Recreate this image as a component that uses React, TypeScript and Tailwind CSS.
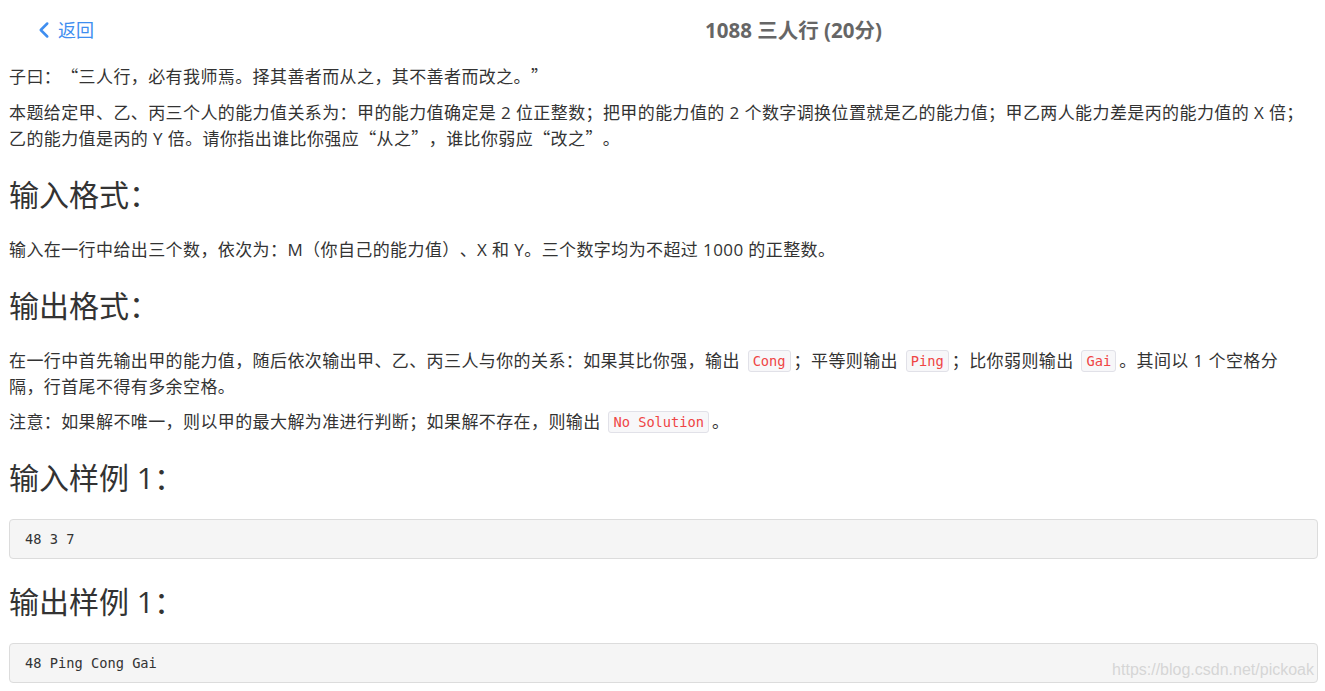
import { ChevronLeft } from "lucide-react";

const Code = ({ children }: { children: React.ReactNode }) => (
  <code className="mx-[3px] inline-block rounded-[3px] border border-[#e1e1e8] bg-[#f7f7f9] px-[4px] font-['DejaVu_Sans_Mono',monospace] text-[13.7px] leading-[20px] tracking-normal text-[#ef4444] align-[1px]">
    {children}
  </code>
);

// full-width curly quotes, as the CJK font draws them
const Q = ({ children }: { children: React.ReactNode }) => (
  <span className="font-['Noto_Sans_CJK_SC',sans-serif] leading-none">{children}</span>
);

const Heading = ({ children }: { children: React.ReactNode }) => (
  <h2 className="mt-[25px] mb-[25px] text-[30px] leading-[35px] font-normal tracking-normal text-[#333]">{children}</h2>
);

const Sample = ({ text, mark }: { text: string; mark?: boolean }) => (
  <div className="relative -mt-[1px] rounded-[4px] border border-[#dcdcdc] bg-[#f5f5f5] px-[15px] py-[9px] font-['DejaVu_Sans_Mono',monospace] text-[13.7px] leading-[20px] tracking-normal text-[#333]">
    {text}
    {mark && (
      <span className="absolute right-[3px] bottom-[1px] font-['Liberation_Sans',sans-serif] text-[16px] leading-[22px] text-[#d6d6d6]">
        https://blog.csdn.net/pickoak
      </span>
    )}
  </div>
);

export default function App() {
  return (
    <div className="min-h-[691px] bg-white font-['Open_Sans','Noto_Sans_CJK_SC',sans-serif] text-[#333] [text-spacing-trim:space-all]">
      <header className="flex h-[60px] items-center pl-[31px]">
        <button className="flex items-center text-[#3f8ef0]">
          <ChevronLeft className="h-[26px] w-[26px]" strokeWidth={2.3} />
          <span className="ml-[1px] text-[18px] leading-none">返回</span>
        </button>
        <h1 className="ml-[611px] text-[20.5px] font-bold text-[#666]">1088 三人行 (20分)</h1>
      </header>

      <main className="pl-[9px] pr-[7px] pb-[8px] text-[17px] leading-[26px] tracking-[0.4px]">
        <p className="mt-[4px]">
          子曰：<Q>“</Q>三人行，必有我师焉。择其善者而从之，其不善者而改之。<Q>”</Q>
        </p>
        <p className="mt-[10px]">
          本题给定甲、乙、丙三个人的能力值关系为：甲的能力值确定是 2 位正整数；把甲的能力值的 2 个数字调换位置就是乙的能力值；甲乙两人能力差是丙的能力值的 X 倍；
          <br />
          乙的能力值是丙的 Y 倍。请你指出谁比你强应<Q>“</Q>从之<Q>”</Q>，谁比你弱应<Q>“</Q>改之<Q>”</Q>。
        </p>

        <Heading>输入格式：</Heading>
        <p>输入在一行中给出三个数，依次为：M（你自己的能力值）、X 和 Y。三个数字均为不超过 1000 的正整数。</p>

        <Heading>输出格式：</Heading>
        <p>
          在一行中首先输出甲的能力值，随后依次输出甲、乙、丙三人与你的关系：如果其比你强，输出 <Code>Cong</Code>；平等则输出 <Code>Ping</Code>；比你弱则输出 <Code>Gai</Code>。其间以 1 个空格分
          <br />
          隔，行首尾不得有多余空格。
        </p>
        <p className="mt-[9px]">
          注意：如果解不唯一，则以甲的最大解为准进行判断；如果解不存在，则输出 <Code>No Solution</Code>。
        </p>

        <Heading>输入样例 1：</Heading>
        <Sample text="48 3 7" />

        <Heading>输出样例 1：</Heading>
        <Sample text="48 Ping Cong Gai" mark />
      </main>
    </div>
  );
}
